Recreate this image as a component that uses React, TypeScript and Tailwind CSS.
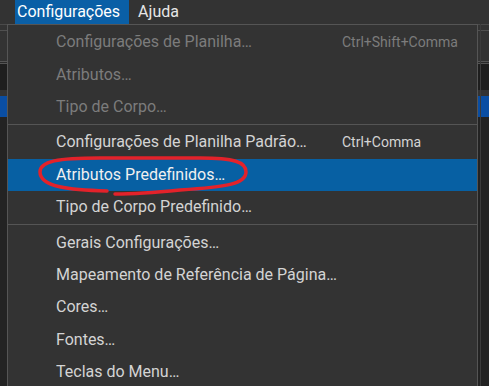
import React from "react";

type Item = { label: string; shortcut?: string; disabled?: boolean; active?: boolean } | "sep";

const items: Item[] = [
  { label: "Configurações de Planilha…", shortcut: "Ctrl+Shift+Comma", disabled: true },
  { label: "Atributos…", disabled: true },
  { label: "Tipo de Corpo…", disabled: true },
  "sep",
  { label: "Configurações de Planilha Padrão…", shortcut: "Ctrl+Comma" },
  { label: "Atributos Predefinidos…", active: true },
  { label: "Tipo de Corpo Predefinido…" },
  "sep",
  { label: "Gerais Configurações…" },
  { label: "Mapeamento de Referência de Página…" },
  { label: "Cores…" },
  { label: "Fontes…" },
  { label: "Teclas do Menu…" },
];

export default function App() {
  return (
    <div
      className="relative w-[489px] h-[386px] overflow-hidden bg-[#222222] text-[16px]"
      style={{ fontFamily: "Roboto, 'Liberation Sans', sans-serif" }}
    >
      {/* menubar */}
      <div className="flex h-[24px] bg-[#333333] text-[#e6e6e6]">
        <div className="w-[15px]" />
        <div className="flex items-center h-full pl-[2px] pr-[9px] bg-[#0a5fa6] text-white">Configurações</div>
        <div className="flex items-center h-full px-[9px]">Ajuda</div>
      </div>
      {/* background strips */}
      <div className="flex flex-col">
        <div className="h-[1px] bg-[#4a4a4a]" />
        <div className="h-[5px] bg-[#333333]" />
        <div className="h-[1px] bg-[#505050]" />
        <div className="h-[30px] bg-[#333333]" />
        <div className="h-[1px] bg-[#555555]" />
        <div className="h-[1px] bg-[#2a2a2a]" />
        <div className="h-[1px] bg-[#555555]" />
        <div className="h-[26px] bg-[#1e1e1e]" />
        <div className="h-[6px] bg-[#333333]" />
        <div className="h-[21px] bg-[#0a4ea3]" />
        <div className="h-[270px] bg-[#232323]" />
      </div>
      <div className="absolute left-[480px] top-[24px] bottom-0 w-[1px] bg-[#3c3c3c]" />

      {/* dropdown menu */}
      <div className="absolute left-[7px] top-[24px] w-[471px] h-[380px] border border-[#555555] bg-[#333333] pt-[1px]">
        {items.map((it, i) =>
          it === "sep" ? (
            <div key={i} className="h-[3px] flex items-center">
              <div className="h-[1px] w-full bg-[#555555]" />
            </div>
          ) : (
            <div
              key={i}
              className={
                "flex items-center h-[32.4px] pl-[48px] " +
                (it.active ? "bg-[#0760a3] text-[#f0f0f0] " : "") +
                (it.disabled ? "text-[#7c7c7c]" : it.active ? "" : "text-[#d4d4d4]")
              }
            >
              <span className="w-[286px] whitespace-nowrap overflow-hidden">{it.label}</span>
              {it.shortcut && <span className="text-[14px] whitespace-nowrap">{it.shortcut}</span>}
            </div>
          )
        )}
      </div>

      {/* red annotation */}
      <svg className="absolute left-0 top-0" width="489" height="386" viewBox="0 0 489 386" fill="none">
        <path
          d="M107 191 C 70 190, 40 187, 40 172 C 40 161, 58 158, 100 158 L 200 158 C 234 158, 246 162, 246 172 C 246 184, 226 187, 180 190 C 150 193, 127 194, 115 194"
          stroke="#e3222a"
          strokeWidth="3.5"
          strokeLinecap="round"
        />
      </svg>
    </div>
  );
}
